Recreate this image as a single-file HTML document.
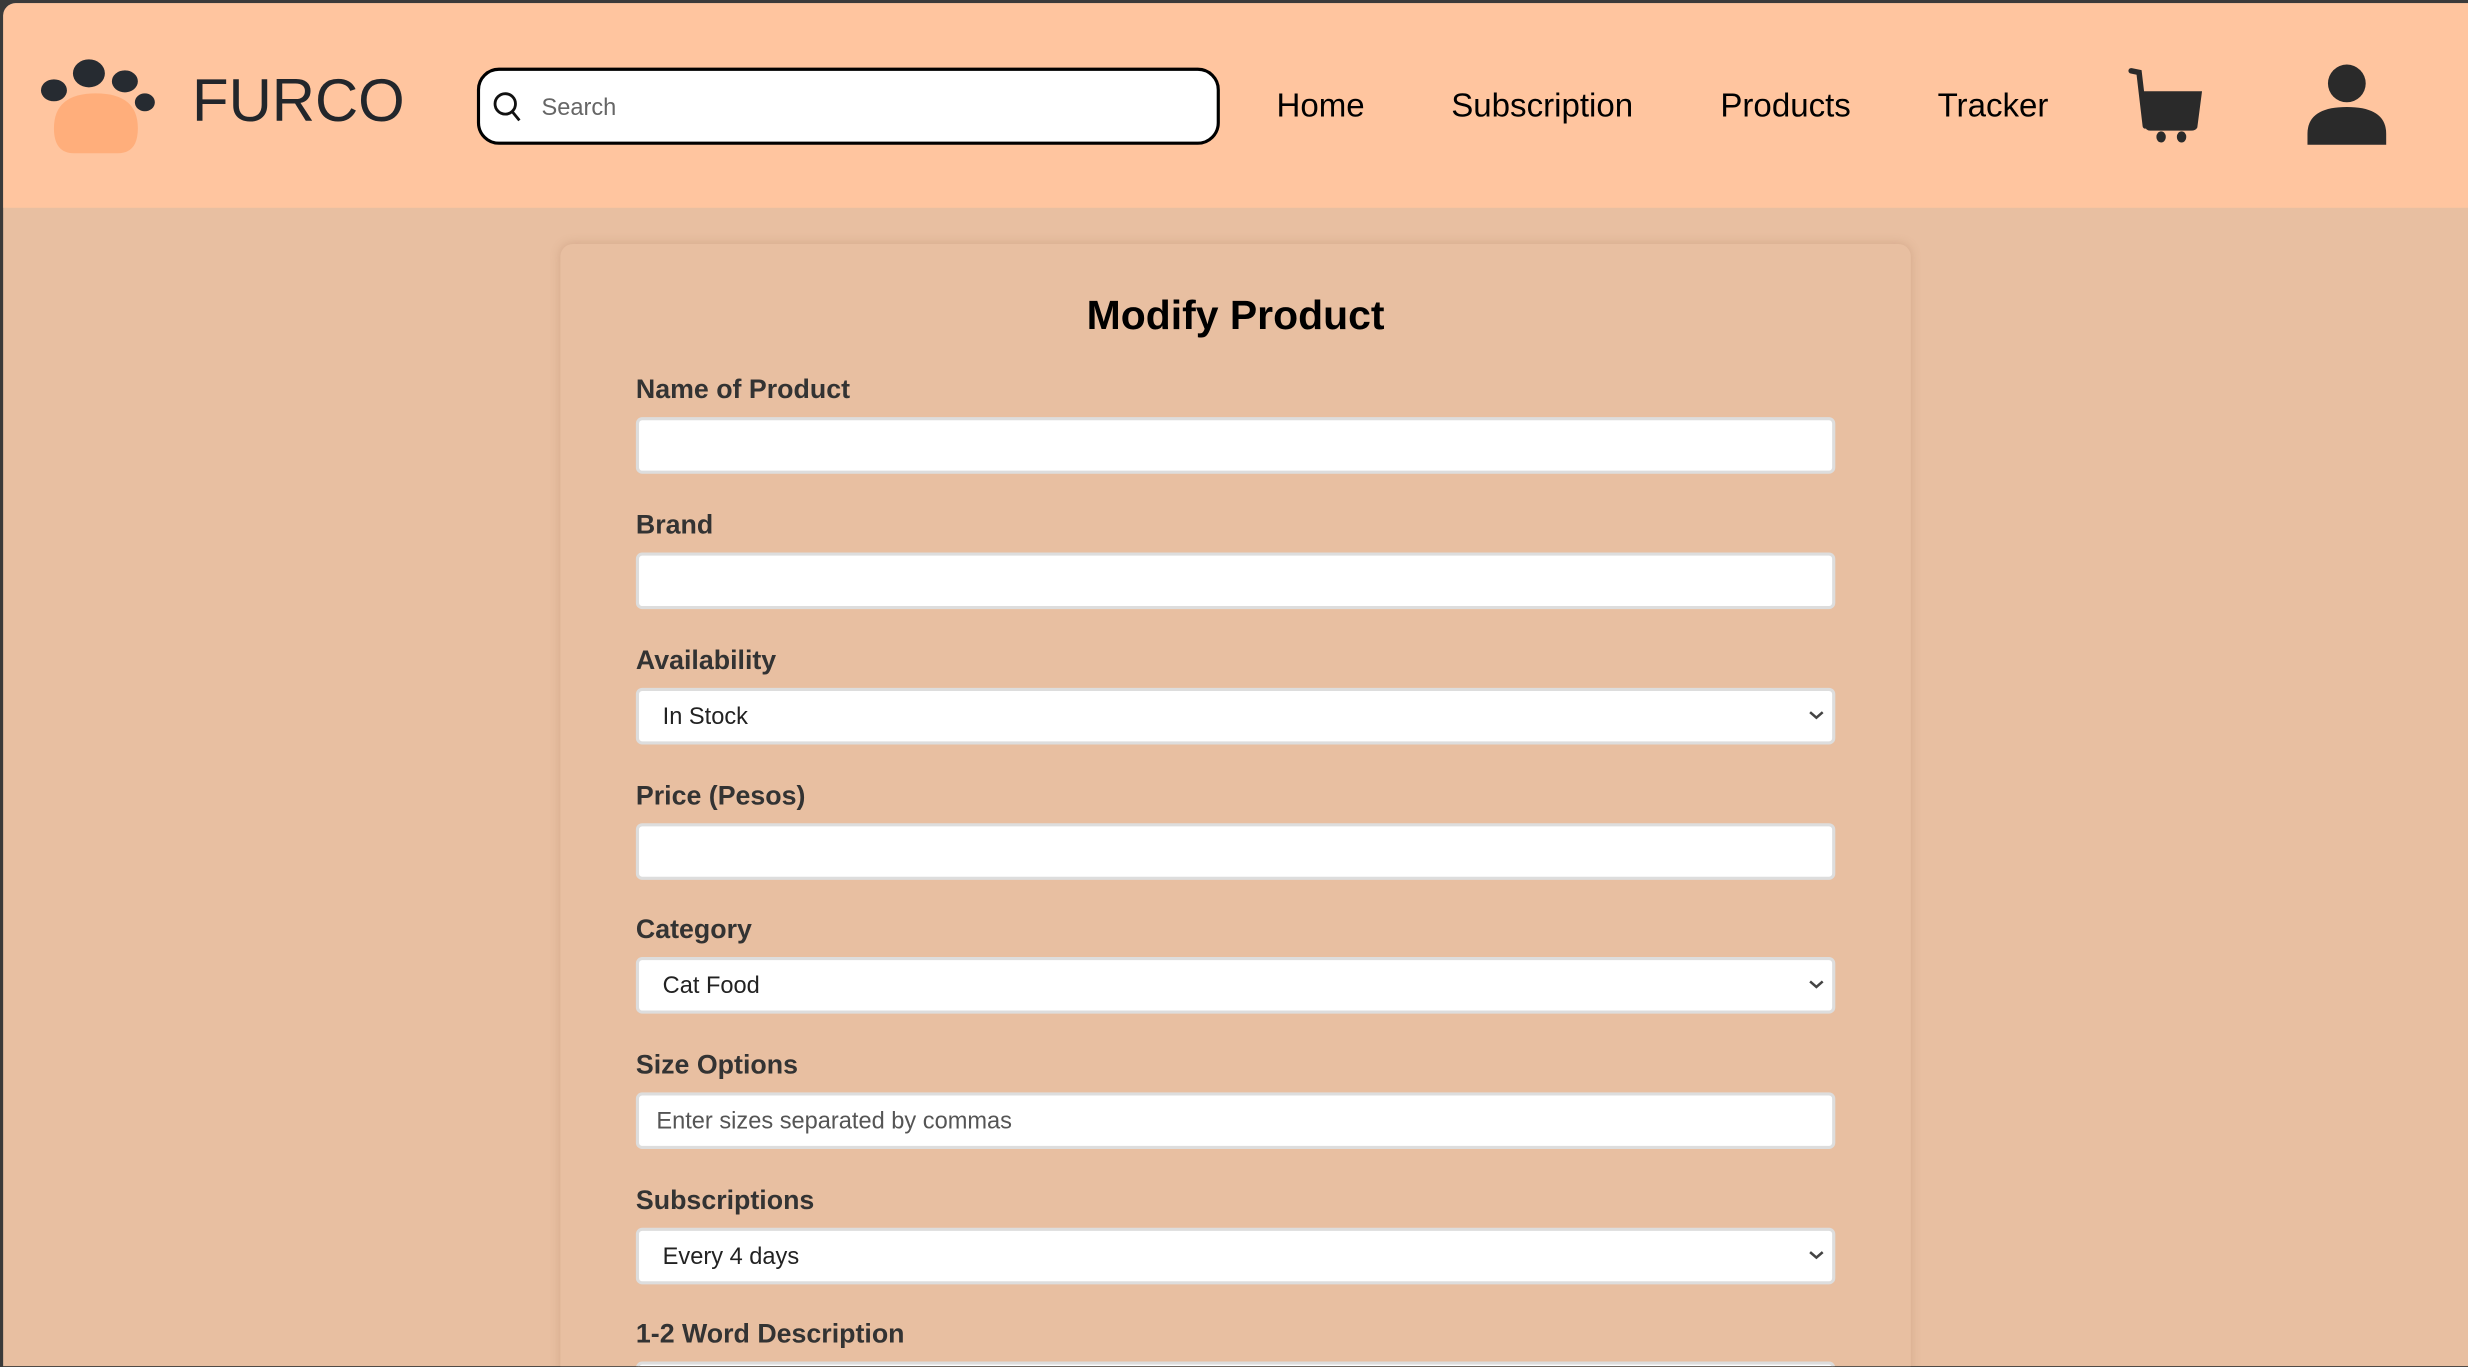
<!DOCTYPE html>
<html><head><meta charset="utf-8"><style>
html,body{margin:0;padding:0;width:2468px;height:1367px;overflow:hidden;background:#3a3a3a;}
#w{position:absolute;left:0;top:0;width:1568px;height:868px;transform:scale(1.574);transform-origin:0 0;font-family:"Liberation Sans",Arial,sans-serif;overflow:hidden;}
#pg{position:absolute;left:2px;top:2px;right:0;bottom:0;background:#e8bfa1;border-top-left-radius:8px;overflow:hidden;}
#hd{position:absolute;left:0;top:0;right:0;height:130px;background:#ffc59f;}
.logo{position:absolute;left:120px;top:42px;font-size:38px;color:#22262b;}
.search{position:absolute;left:301px;top:41px;width:468px;height:45px;border:2px solid #000;border-radius:14px;background:#fff;}
.search span{position:absolute;left:39px;top:15px;font-size:15px;color:#666;}
.nav{position:absolute;top:54px;font-size:21px;color:#000;}
.card{position:absolute;left:354px;top:153px;width:858px;height:760px;background:#e8bfa1;border-radius:8px;box-shadow:0 0 6px rgba(150,100,70,.25);}
h1{position:absolute;left:0;right:0;top:183px;margin:0;text-align:center;font-size:26px;font-weight:bold;color:#000;}
.lb{position:absolute;left:402px;font-size:17px;font-weight:bold;color:#333;}
.in{position:absolute;left:402px;width:758px;height:32px;background:#fff;border:2px solid #ddd;border-radius:4px;font-size:15px;color:#222;}
.in span{position:absolute;left:15px;top:8px;}
.in svg{position:absolute;right:5px;top:12px;}
</style></head><body><div id="w"><div id="pg">
<div id="hd">
<svg style="position:absolute;left:17px;top:30px" width="82.6" height="66" viewBox="30 50 130 104">
<path d="M54 128 Q54 93 96 93 Q138 93 138 128 Q138 153 118 153 L74 153 Q54 153 54 128 Z" fill="#ffae7b"/>
<ellipse cx="54" cy="90" rx="13" ry="11" fill="#262b31"/>
<ellipse cx="89" cy="73" rx="16" ry="14" fill="#262b31"/>
<ellipse cx="125" cy="81" rx="13" ry="11" fill="#262b31"/>
<ellipse cx="145" cy="102" rx="10" ry="9" fill="#262b31"/>
</svg>
<div class="logo">FURCO</div>
<div class="search"><svg style="position:absolute;left:8px;top:13px" width="20" height="21" viewBox="0 0 20 21"><circle cx="8" cy="8" r="6.5" fill="none" stroke="#111" stroke-width="1.8"/><path d="M12.5 13 L17 18.5" stroke="#111" stroke-width="1.8"/></svg><span>Search</span></div>
<div class="nav" style="left:809px">Home</div>
<div class="nav" style="left:920px">Subscription</div>
<div class="nav" style="left:1091px">Products</div>
<div class="nav" style="left:1229px">Tracker</div>
<svg style="position:absolute;left:1349px;top:41px" width="50" height="48" viewBox="0 0 50 48">
<path d="M3 2 L8 3 L12 37" stroke="#2a2a2a" stroke-width="3.5" fill="none" stroke-linecap="round"/>
<path d="M10 15 L48 15 L45 38 Q44 40 41 40 L15 40 Q12 40 12 37 Z" fill="#2a2a2a"/>
<ellipse cx="22" cy="44" rx="3" ry="3.5" fill="#2a2a2a"/><ellipse cx="35" cy="44" rx="3" ry="3.5" fill="#2a2a2a"/>
</svg>
<svg style="position:absolute;left:1462px;top:39px" width="54" height="52" viewBox="0 0 54 52">
<ellipse cx="27" cy="12" rx="12" ry="12" fill="#2a2a2a"/>
<path d="M2 51 L2 44 Q2 27 27 27 Q52 27 52 44 L52 51 Z" fill="#2a2a2a"/>
</svg>
</div>
<div class="card"></div>
<h1>Modify Product</h1>
<div class="lb" style="top:236px">Name of Product</div><div class="in" style="top:263px"></div>
<div class="lb" style="top:322px">Brand</div><div class="in" style="top:349px"></div>
<div class="lb" style="top:408px">Availability</div><div class="in" style="top:435px"><span>In Stock</span><svg width="10" height="7" viewBox="0 0 10 7"><path d="M1 1.5 L5 5 L9 1.5" stroke="#444" stroke-width="1.6" fill="none"/></svg></div>
<div class="lb" style="top:494px">Price (Pesos)</div><div class="in" style="top:521px"></div>
<div class="lb" style="top:579px">Category</div><div class="in" style="top:606px"><span>Cat Food</span><svg width="10" height="7" viewBox="0 0 10 7"><path d="M1 1.5 L5 5 L9 1.5" stroke="#444" stroke-width="1.6" fill="none"/></svg></div>
<div class="lb" style="top:665px">Size Options</div><div class="in" style="top:692px"><span style="left:11px;color:#555">Enter sizes separated by commas</span></div>
<div class="lb" style="top:751px">Subscriptions</div><div class="in" style="top:778px"><span>Every 4 days</span><svg width="10" height="7" viewBox="0 0 10 7"><path d="M1 1.5 L5 5 L9 1.5" stroke="#444" stroke-width="1.6" fill="none"/></svg></div>
<div class="lb" style="top:836px">1-2 Word Description</div><div class="in" style="top:863px"></div>
</div></div></body></html>
